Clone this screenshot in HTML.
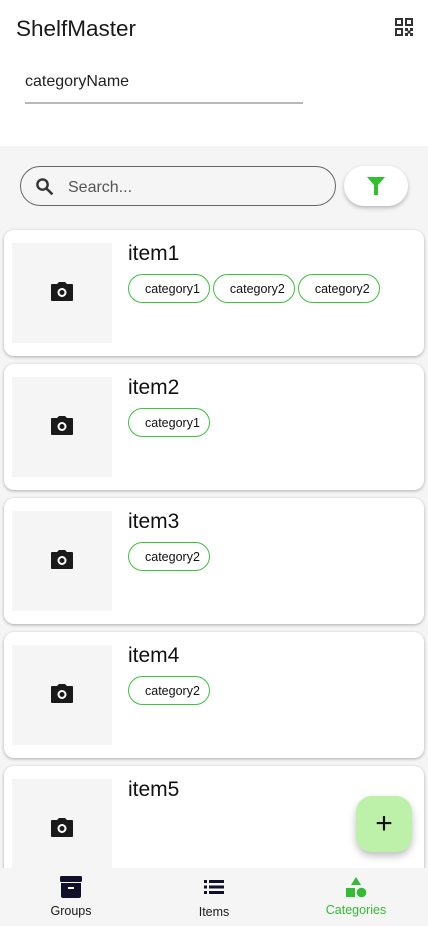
<!DOCTYPE html><html><head><style>
*{box-sizing:border-box;margin:0;padding:0}
body{width:428px;height:926px;overflow:hidden;font-family:"Liberation Sans",sans-serif;background:#f4f5f4;position:relative;color:#1a1a1a}
.hdr{position:absolute;left:0;top:0;width:428px;height:146px;background:#fff}
.title{position:absolute;left:16px;top:16px;font-size:22.5px;color:#1a1a1a}
.inp{position:absolute;left:25px;top:73px;font-size:16px;color:#222}
.line{position:absolute;left:25px;top:102px;width:278px;height:2px;background:#b8b8b4}
.search{position:absolute;left:20px;top:166px;width:316px;height:40px;border:1px solid #666;border-radius:20px}
.search span{position:absolute;left:47px;top:11px;font-size:16px;color:#555}
.filter{position:absolute;left:344px;top:166px;width:64px;height:40px;border-radius:20px;background:#fff;box-shadow:0 2px 4px rgba(0,0,0,.25)}
.card{position:absolute;left:4px;width:420px;height:126px;background:#fff;border-radius:10px;box-shadow:0 1px 3px rgba(0,0,0,.3)}
.img{position:absolute;left:8px;top:13px;width:100px;height:100px;background:#f4f5f4}
.img svg{position:absolute;left:39px;top:39px}
.name{position:absolute;left:124px;top:12px;font-size:21px;color:#111}
.chips{position:absolute;left:124px;top:44px;display:flex;gap:3px}
.chip{height:29px;border:1px solid #3cc33c;border-radius:15px;padding:0 9px 0 16px;font-size:12.5px;line-height:29px;color:#111}
.fab{position:absolute;left:356px;top:796px;width:56px;height:56px;border-radius:16px;background:#bdf0a8;box-shadow:0 4px 8px rgba(0,0,0,.25);text-align:center;line-height:56px;font-size:30px;color:#111}
.nav{position:absolute;left:0;top:868px;width:428px;height:58px;background:#f4f5f4}
.nav div{position:absolute;top:0;text-align:center;font-size:12.5px}
</style></head><body>
<div class="hdr">
<div class="title">ShelfMaster</div>
<svg style="position:absolute;left:395px;top:18px" width="18" height="19" viewBox="0 0 18 19" fill="#333"><path d="M0 0h8v8H0zM2 2v4h4V2zM10 0h8v8h-8zM12 2v4h4V2zM0 10h8v8H0zM2 12v4h4v-4z" fill-rule="evenodd"/><rect x="10" y="10" width="3" height="3"/><rect x="15" y="10" width="3" height="3"/><rect x="12.5" y="12.5" width="3" height="3"/><rect x="10" y="15" width="3" height="3"/><rect x="15" y="15" width="3" height="3"/></svg>
<div class="inp">categoryName</div><div class="line"></div>
</div>
<div class="search"><svg style="position:absolute;left:14px;top:10px" width="19" height="19" viewBox="0 0 24 24"><circle cx="9.5" cy="9.5" r="6.5" stroke="#333" stroke-width="3" fill="none"/><path d="M14.5 14.5L22 22" stroke="#333" stroke-width="3.2"/></svg><span style="top:12px">Search...</span></div>
<div class="filter"><svg style="position:absolute;left:23px;top:11px" width="18" height="18" viewBox="0 0 18 18"><path d="M0 0h18l-7 8v10h-4V8z" fill="#2fbf2f"/></svg></div>

<div class="card" style="top:230px"><div class="img"><svg width="22" height="19" viewBox="0 0 22 19"><path d="M6 2l2-2h6l2 2h5a1 1 0 011 1v15a1 1 0 01-1 1H1a1 1 0 01-1-1V3a1 1 0 011-1z" fill="#1a1a1a"/><circle cx="11" cy="10.5" r="3.5" fill="none" stroke="#fff" stroke-width="2"/></svg></div><div class="name">item1</div><div class="chips"><div class="chip">category1</div><div class="chip">category2</div><div class="chip">category2</div></div></div>
<div class="card" style="top:364px"><div class="img"><svg width="22" height="19" viewBox="0 0 22 19"><path d="M6 2l2-2h6l2 2h5a1 1 0 011 1v15a1 1 0 01-1 1H1a1 1 0 01-1-1V3a1 1 0 011-1z" fill="#1a1a1a"/><circle cx="11" cy="10.5" r="3.5" fill="none" stroke="#fff" stroke-width="2"/></svg></div><div class="name">item2</div><div class="chips"><div class="chip">category1</div></div></div>
<div class="card" style="top:498px"><div class="img"><svg width="22" height="19" viewBox="0 0 22 19"><path d="M6 2l2-2h6l2 2h5a1 1 0 011 1v15a1 1 0 01-1 1H1a1 1 0 01-1-1V3a1 1 0 011-1z" fill="#1a1a1a"/><circle cx="11" cy="10.5" r="3.5" fill="none" stroke="#fff" stroke-width="2"/></svg></div><div class="name">item3</div><div class="chips"><div class="chip">category2</div></div></div>
<div class="card" style="top:632px"><div class="img"><svg width="22" height="19" viewBox="0 0 22 19"><path d="M6 2l2-2h6l2 2h5a1 1 0 011 1v15a1 1 0 01-1 1H1a1 1 0 01-1-1V3a1 1 0 011-1z" fill="#1a1a1a"/><circle cx="11" cy="10.5" r="3.5" fill="none" stroke="#fff" stroke-width="2"/></svg></div><div class="name">item4</div><div class="chips"><div class="chip">category2</div></div></div>
<div class="card" style="top:766px"><div class="img"><svg width="22" height="19" viewBox="0 0 22 19"><path d="M6 2l2-2h6l2 2h5a1 1 0 011 1v15a1 1 0 01-1 1H1a1 1 0 01-1-1V3a1 1 0 011-1z" fill="#1a1a1a"/><circle cx="11" cy="10.5" r="3.5" fill="none" stroke="#fff" stroke-width="2"/></svg></div><div class="name">item5</div></div>
<div class="fab">+</div>
<div class="nav">
<div style="left:41px;width:60px"><svg style="margin-top:8px" width="22" height="22" viewBox="0 0 22 22"><rect x="0" y="0" width="22" height="6" rx="1.5" fill="#10102a"/><path d="M1 7h20v13a2 2 0 01-2 2H3a2 2 0 01-2-2z" fill="#10102a"/><rect x="8" y="11" width="6" height="2" fill="#fff"/></svg><div style="position:static;margin-top:3px">Groups</div></div>
<div style="left:184px;width:60px"><svg style="margin-top:12px" width="20" height="14" viewBox="0 0 20 14" fill="#10102a"><rect x="0" y="0" width="3" height="3"/><rect x="5" y="0" width="15" height="3"/><rect x="0" y="5.5" width="3" height="3"/><rect x="5" y="5.5" width="15" height="3"/><rect x="0" y="11" width="3" height="3"/><rect x="5" y="11" width="15" height="3"/></svg><div style="position:static;margin-top:8px">Items</div></div>
<div style="left:316px;width:80px;color:#33bb33;font-size:14px"><svg style="margin-top:9px" width="22" height="22" viewBox="0 0 22 22" fill="#33bb33"><path d="M11 0l5 8H6z"/><rect x="1" y="11" width="9" height="9"/><circle cx="16.5" cy="15.5" r="4.8"/></svg><div style="position:static;margin-top:1px">Categories</div></div>
</div>
</body></html>
